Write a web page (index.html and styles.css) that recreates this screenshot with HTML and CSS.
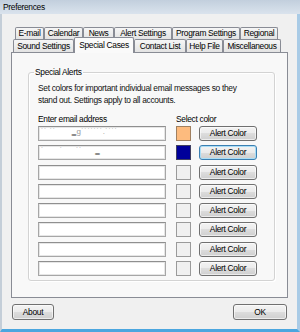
FILE: index.html
```html
<!DOCTYPE html>
<html>
<head>
<meta charset="utf-8">
<title>Preferences</title>
<link rel="stylesheet" href="styles.css">
</head>
<body>
<div class="window">
  <div class="titlebar">Preferences</div>
  <div class="tabs">
    <div class="tabrow row1">
      <div class="tab t-email">E-mail</div>
      <div class="tab t-calendar">Calendar</div>
      <div class="tab t-news">News</div>
      <div class="tab t-alert">Alert Settings</div>
      <div class="tab t-program">Program Settings</div>
      <div class="tab t-regional">Regional</div>
    </div>
    <div class="tabrow row2">
      <div class="tab t-sound">Sound Settings</div>
      <div class="tab t-special active">Special Cases</div>
      <div class="tab t-contact">Contact List</div>
      <div class="tab t-help">Help File</div>
      <div class="tab t-misc">Miscellaneous</div>
    </div>
  </div>
  <div class="panel">
    <fieldset class="group">
      <legend>Special Alerts</legend>
      <p class="desc">Set colors for important individual email messages so they<br>stand out. Settings apply to all accounts.</p>
      <div class="labels">
        <div class="lbl-email">Enter email address</div>
        <div class="lbl-color">Select color</div>
      </div>
      <div class="rows">
        <div class="row"><div class="input"><span class="blur">˙˙ ˙˙&nbsp;&nbsp;&nbsp;&nbsp;&nbsp;&nbsp;<b class="dash">‗</b>g˙˙˙˙˙˙˙.˙˙˙˙</span></div><div class="swatch orange"></div><button class="btn">Alert Color</button></div>
        <div class="row"><div class="input"><span class="blur">˙&nbsp;&nbsp;&nbsp;&nbsp;&nbsp;&nbsp;˙&nbsp;&nbsp;&nbsp;&nbsp;&nbsp;˙˙&nbsp;&nbsp;&nbsp;&nbsp;&nbsp;<b class="dash">‗</b></span></div><div class="swatch blue"></div><button class="btn focus">Alert Color</button></div>
        <div class="row"><div class="input"></div><div class="swatch"></div><button class="btn">Alert Color</button></div>
        <div class="row"><div class="input"></div><div class="swatch"></div><button class="btn">Alert Color</button></div>
        <div class="row"><div class="input"></div><div class="swatch"></div><button class="btn">Alert Color</button></div>
        <div class="row"><div class="input"></div><div class="swatch"></div><button class="btn">Alert Color</button></div>
        <div class="row"><div class="input"></div><div class="swatch"></div><button class="btn">Alert Color</button></div>
        <div class="row"><div class="input"></div><div class="swatch"></div><button class="btn">Alert Color</button></div>
      </div>
    </fieldset>
  </div>
  <div class="footer">
    <button class="btn about">About</button>
    <button class="btn ok">OK</button>
  </div>
</div>
</body>
</html>
```
FILE: styles.css
```css
* { box-sizing: border-box; }
html, body { margin: 0; padding: 0; }
body {
  font-family: "Liberation Sans", Arial, sans-serif;
  font-size: 8.4px;
  letter-spacing: -0.3px;
  color: #000;
  background: #f0f0f0;
}
.window {
  width: 300px;
  height: 332px;
  background: #f0f0f0;
  border-left: 2px solid #c4ced8;
  border-right: 3px solid #a9cbe6;
  border-bottom: 3px solid #4ba6df;
  display: flex;
  flex-direction: column;
}
.titlebar {
  height: 14px;
  margin: 0 -3px 0 -2px;
  padding-left: 3px;
  line-height: 14px;
  background: linear-gradient(#c2cfdd, #dae3ed);
  flex: none;
}
.tabs { margin-top: 13px; flex: none; }
.tabrow { display: flex; align-items: flex-start; }
.row1 { height: 12px; margin-left: 13px; }
.row2 { height: 13px; margin-left: 11px; }
.tab {
  border: 1px solid #898c95;
  border-bottom: 0;
  background: linear-gradient(#f6f6f6, #e3e3e3);
  text-align: center;
  white-space: nowrap;
  border-radius: 2px 2px 0 0;
}
.row1 .tab { height: 12px; line-height: 11px; }
.row2 .tab { height: 13px; line-height: 12px; }
.row2 .tab.active {
  height: 16px;
  margin-top: -2px;
  line-height: 14px;
  background: #fafafa;
  position: relative;
  z-index: 1;
}
.t-email { width: 29px; }
.t-calendar { width: 39px; }
.t-news { width: 31px; }
.t-alert { width: 58px; }
.t-program { width: 68px; }
.t-regional { width: 38px; }
.t-sound { width: 61px; }
.t-special { width: 60px; }
.t-contact { width: 52px; }
.t-help { width: 37px; }
.t-misc { width: 58px; }

.panel {
  flex: none;
  margin-left: 9px;
  width: 277px;
  height: 246px;
  border: 1px solid #898c95;
  background: #f8f8f8;
  padding: 13px 12px 0 16px;
}
.group {
  margin: 0;
  border: 1px solid #d3d3d3;
  border-radius: 3px;
  padding: 4px 8px 4px 9px;
  box-shadow: inset 1px 1px 0 #fff, 1px 1px 0 #fff;
}
.group legend {
  padding: 0 1px;
  margin-left: -4px;
  line-height: 12px;
}
.desc { margin: 0; line-height: 12px; color: #111; }
.labels { display: flex; margin-top: 7px; line-height: 12px; height: 12px; }
.lbl-email { width: 138px; }
.rows { display: flex; flex-direction: column; gap: 4.3px; margin-top: 1px; }
.row { display: flex; height: 15px; }
.input {
  width: 128px;
  height: 15px;
  background: #fff;
  border: 1px solid #a6a6a6;
  border-top-color: #8f8f8f;
  box-shadow: inset 0 0 0 1px #e6e6e6;
  overflow: hidden;
  line-height: 9px;
  padding-left: 2px;
}
.blur { color: #9a9a9a; font-size: 8px; letter-spacing: 0.4px; }
.dash { color: #333; font-weight: normal; }
.swatch {
  width: 15px;
  height: 15px;
  margin-left: 10px;
  border: 1px solid #9a9a9a;
  background: #f0f0f0;
}
.swatch.orange { background: #fdbb7e; border-color: #a08060; }
.swatch.blue { background: #00009a; border-color: #404060; }
.btn {
  font-family: inherit;
  font-size: 8.4px;
  letter-spacing: -0.3px;
  color: #000;
  padding: 0;
  border: 1px solid #707070;
  border-radius: 3px;
  background: linear-gradient(#f3f3f3 0%, #ebebeb 50%, #dddddd 50%, #cfcfcf 100%);
  box-shadow: inset 0 0 0 1px rgba(255,255,255,0.6);
  line-height: 13px;
}
.row .btn { width: 58px; height: 15px; margin-left: 8px; }
.btn.focus {
  border-color: #3c7fb1;
  box-shadow: inset 0 0 0 1px #a9def7;
}
.footer {
  flex: none;
  display: flex;
  justify-content: space-between;
  margin-top: 6px;
  padding: 0 10px;
}
.footer .btn { height: 16px; }
.about { width: 42px; }
.ok { width: 54px; }
```
